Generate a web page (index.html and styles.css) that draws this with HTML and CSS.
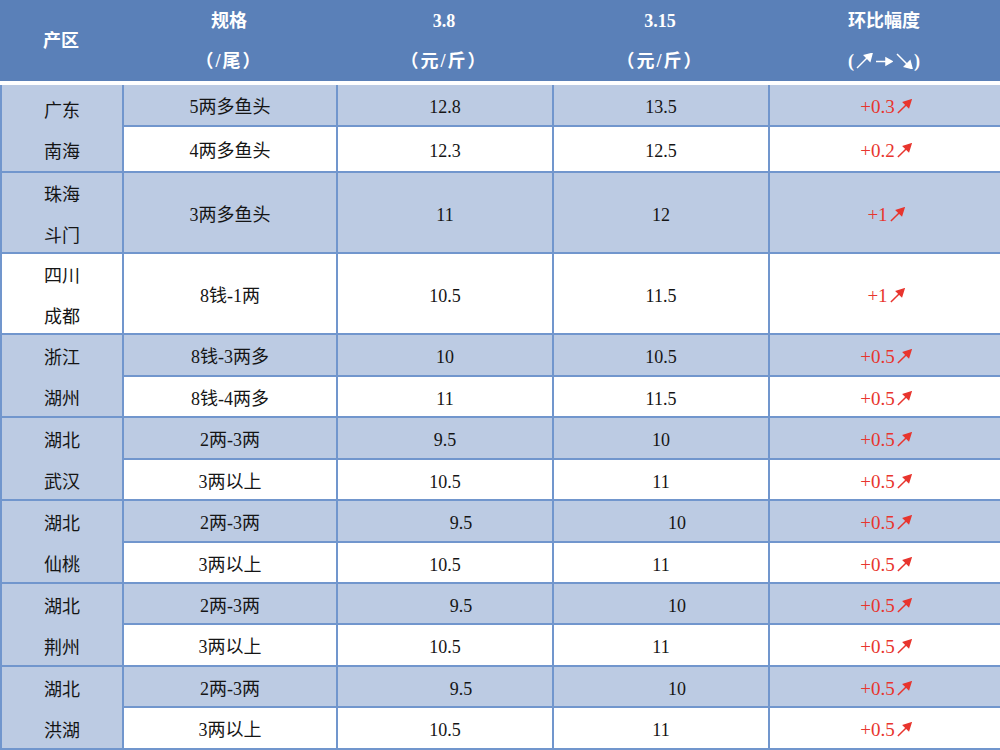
FILE: index.html
```html
<!DOCTYPE html>
<html lang="zh">
<head>
<meta charset="utf-8">
<title>价格表</title>
<link rel="stylesheet" href="styles.css">
</head>
<body>
<div class="hdr">
  <div class="hc c1"><span>产区</span></div>
  <div class="hc c2"><span>规格</span><span class="sp">（/尾）</span></div>
  <div class="hc c3"><span>3.8</span><span class="sp">（元/斤）</span></div>
  <div class="hc c4"><span>3.15</span><span class="sp">（元/斤）</span></div>
  <div class="hc c5"><span>环比幅度</span><span>(<svg class="harr" viewBox="0 0 18 16"><line x1="2" y1="15" x2="13" y2="4"/><polygon points="17,0.5 9.5,2.5 15,8"/></svg><svg class="harr" viewBox="0 0 18 16"><line x1="1" y1="8.5" x2="12" y2="8.5"/><polygon points="17,8.5 11,5 11,12"/></svg><svg class="harr" viewBox="0 0 18 16"><line x1="2" y1="1" x2="13" y2="12"/><polygon points="17,15.5 9.5,13.5 15,8"/></svg>)</span></div>
</div>
<table class="grid">
  <colgroup><col class="w1"><col class="w2"><col class="w3"><col class="w4"><col class="w5"></colgroup>
  <tbody>
    <tr class="b h41 first"><td class="region bluecell" rowspan="2"><div class="rl">广东<br>南海</div></td><td>5两多鱼头</td><td>12.8</td><td>13.5</td><td class="up">+0.3<svg class="arr" viewBox="0 0 16 16"><line x1="1.5" y1="15" x2="11" y2="5.5"/><polygon points="15.5,1 7.5,3.5 13,9"/></svg></td></tr>
    <tr class="w h46"><td>4两多鱼头</td><td>12.3</td><td>12.5</td><td class="up">+0.2<svg class="arr" viewBox="0 0 16 16"><line x1="1.5" y1="15" x2="11" y2="5.5"/><polygon points="15.5,1 7.5,3.5 13,9"/></svg></td></tr>

    <tr class="b h81"><td class="region bluecell"><div class="rl">珠海<br>斗门</div></td><td>3两多鱼头</td><td>11</td><td>12</td><td class="up">+1<svg class="arr" viewBox="0 0 16 16"><line x1="1.5" y1="15" x2="11" y2="5.5"/><polygon points="15.5,1 7.5,3.5 13,9"/></svg></td></tr>

    <tr class="w h81"><td class="region"><div class="rl">四川<br>成都</div></td><td>8钱-1两</td><td>10.5</td><td>11.5</td><td class="up">+1<svg class="arr" viewBox="0 0 16 16"><line x1="1.5" y1="15" x2="11" y2="5.5"/><polygon points="15.5,1 7.5,3.5 13,9"/></svg></td></tr>

    <tr class="b h42"><td class="region bluecell" rowspan="2"><div class="rl">浙江<br>湖州</div></td><td>8钱-3两多</td><td>10</td><td>10.5</td><td class="up">+0.5<svg class="arr" viewBox="0 0 16 16"><line x1="1.5" y1="15" x2="11" y2="5.5"/><polygon points="15.5,1 7.5,3.5 13,9"/></svg></td></tr>
    <tr class="w h41"><td>8钱-4两多</td><td>11</td><td>11.5</td><td class="up">+0.5<svg class="arr" viewBox="0 0 16 16"><line x1="1.5" y1="15" x2="11" y2="5.5"/><polygon points="15.5,1 7.5,3.5 13,9"/></svg></td></tr>

    <tr class="b h42"><td class="region bluecell" rowspan="2"><div class="rl">湖北<br>武汉</div></td><td>2两-3两</td><td>9.5</td><td>10</td><td class="up">+0.5<svg class="arr" viewBox="0 0 16 16"><line x1="1.5" y1="15" x2="11" y2="5.5"/><polygon points="15.5,1 7.5,3.5 13,9"/></svg></td></tr>
    <tr class="w h41"><td>3两以上</td><td>10.5</td><td>11</td><td class="up">+0.5<svg class="arr" viewBox="0 0 16 16"><line x1="1.5" y1="15" x2="11" y2="5.5"/><polygon points="15.5,1 7.5,3.5 13,9"/></svg></td></tr>

    <tr class="b h42"><td class="region bluecell" rowspan="2"><div class="rl">湖北<br>仙桃</div></td><td>2两-3两</td><td class="shift">9.5</td><td class="shift">10</td><td class="up">+0.5<svg class="arr" viewBox="0 0 16 16"><line x1="1.5" y1="15" x2="11" y2="5.5"/><polygon points="15.5,1 7.5,3.5 13,9"/></svg></td></tr>
    <tr class="w h41"><td>3两以上</td><td>10.5</td><td>11</td><td class="up">+0.5<svg class="arr" viewBox="0 0 16 16"><line x1="1.5" y1="15" x2="11" y2="5.5"/><polygon points="15.5,1 7.5,3.5 13,9"/></svg></td></tr>

    <tr class="b h41"><td class="region bluecell" rowspan="2"><div class="rl">湖北<br>荆州</div></td><td>2两-3两</td><td class="shift">9.5</td><td class="shift">10</td><td class="up">+0.5<svg class="arr" viewBox="0 0 16 16"><line x1="1.5" y1="15" x2="11" y2="5.5"/><polygon points="15.5,1 7.5,3.5 13,9"/></svg></td></tr>
    <tr class="w h42"><td>3两以上</td><td>10.5</td><td>11</td><td class="up">+0.5<svg class="arr" viewBox="0 0 16 16"><line x1="1.5" y1="15" x2="11" y2="5.5"/><polygon points="15.5,1 7.5,3.5 13,9"/></svg></td></tr>

    <tr class="b h41"><td class="region bluecell" rowspan="2"><div class="rl">湖北<br>洪湖</div></td><td>2两-3两</td><td class="shift">9.5</td><td class="shift">10</td><td class="up">+0.5<svg class="arr" viewBox="0 0 16 16"><line x1="1.5" y1="15" x2="11" y2="5.5"/><polygon points="15.5,1 7.5,3.5 13,9"/></svg></td></tr>
    <tr class="w h42"><td>3两以上</td><td>10.5</td><td>11</td><td class="up">+0.5<svg class="arr" viewBox="0 0 16 16"><line x1="1.5" y1="15" x2="11" y2="5.5"/><polygon points="15.5,1 7.5,3.5 13,9"/></svg></td></tr>
  </tbody>
</table>
</body>
</html>
```

FILE: styles.css
```css
html, body {
  margin: 0;
  padding: 0;
  background: #ffffff;
}
body {
  width: 1000px;
  height: 750px;
  overflow: hidden;
  font-family: "Liberation Serif", "Noto Sans CJK SC", serif;
  font-size: 18px;
  color: #151515;
}
.hdr {
  display: flex;
  height: 81px;
  background: #5a80b8;
  color: #ffffff;
  font-weight: bold;
  margin-bottom: 4px;
}
.hc {
  display: flex;
  flex-direction: column;
  justify-content: center;
  align-items: center;
  line-height: 40px;
}
.hc span {
  display: flex;
  align-items: center;
  height: 40px;
}
.hc span.sp {
  letter-spacing: 2px;
}
.c1 { width: 122px; }
.c2 { width: 214px; }
.c3 { width: 216px; }
.c4 { width: 216px; }
.c5 { width: 232px; }
.harr {
  width: 18px;
  height: 16px;
  margin: 0 1px;
  stroke: #ffffff;
  stroke-width: 1.5;
  fill: #ffffff;
}
.grid {
  width: 1001px;
  border-collapse: collapse;
  table-layout: fixed;
}
.w1 { width: 122px; }
.w2 { width: 214px; }
.w3 { width: 216px; }
.w4 { width: 216px; }
.w5 { width: 233px; }
.grid td {
  border: 2px solid #7196cd;
  text-align: center;
  vertical-align: middle;
  padding: 4px 0 0 0;
  line-height: 22px;
}
.grid tr.first td {
  border-top: none;
}
.grid tr td:last-child {
  border-right: none;
}
.b td { background: #bccbe3; }
.w td { background: #ffffff; }
.grid td.region {
  background: #ffffff;
  padding: 0;
}
.rl {
  line-height: 41px;
  margin: 0 0 -7px 0;
}
.grid td.region.bluecell { background: #bccbe3; }
.h41 { height: 41px; }
.h42 { height: 42px; }
.h46 { height: 46px; }
.h81 { height: 81px; }
.grid td.shift { padding-left: 32px; }
.up {
  color: #e8352e;
  font-size: 19px;
}
.arr {
  width: 16px;
  height: 15px;
  margin-left: 1px;
  vertical-align: -1px;
  stroke: #e8352e;
  stroke-width: 1.6;
  fill: #e8352e;
}
```
